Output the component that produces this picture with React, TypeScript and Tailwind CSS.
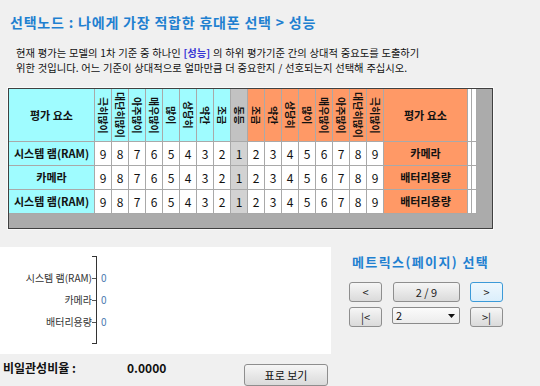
import React from 'react';

const LEFT_HEAD = ['극히많이', '대단히많이', '아주많이', '매우많이', '많이', '상당히', '약간', '조금'];
const RIGHT_HEAD = [...LEFT_HEAD].reverse();
const NUMS = [9, 8, 7, 6, 5, 4, 3, 2, 1, 2, 3, 4, 5, 6, 7, 8, 9];

const ROWS = [
  { left: '시스템 램(RAM)', right: '카메라' },
  { left: '카메라', right: '배터리용량' },
  { left: '시스템 램(RAM)', right: '배터리용량' },
];

const cell = 'border-r border-b border-[#a9a9a9] flex items-center justify-center';
const vtext = 'text-[10px] leading-[11px] font-bold [writing-mode:vertical-rl] [text-orientation:sideways]';

function Btn({ children, w, focus }: { children: React.ReactNode; w: string; focus?: boolean }) {
  return (
    <div
      className={`${w} h-[20px] flex items-center justify-center rounded-[3px] border text-[11px] leading-none text-[#222] bg-linear-to-b ${
        focus
          ? 'border-[#3c9ad8] from-[#eef7fd] to-[#dbeefb]'
          : 'border-[#8e8e8e] from-[#f6f6f6] to-[#dadada]'
      }`}
    >
      {children}
    </div>
  );
}

export default function App() {
  return (
    <div className="w-[540px] h-[386px] overflow-hidden bg-[#f0f0f0] font-['Noto_Sans_CJK_KR',sans-serif] text-[#111]">
      {/* title */}
      <div className="pt-[13px] pl-[10px] text-[14px] leading-[18px] font-bold tracking-[0.8px] text-[#1f80d0]">
        선택노드 : 나에게 가장 적합한 휴대폰 선택 &gt; 성능
      </div>

      {/* description */}
      <p className="mt-[14px] pl-[16px] text-[10.3px] leading-[15px] [word-spacing:0.5px] text-[#111]">
        현재 평가는 모델의 1차 기준 중 하나인 <span className="font-bold text-[#3535d5]">[성능]</span> 의 하위 평가기준 간의 상대적 중요도를 도출하기
        <br />
        위한 것입니다. 어느 기준이 상대적으로 얼마만큼 더 중요한지 / 선호되는지 선택해 주십시오.
      </p>

      {/* comparison table */}
      <div className="mt-[13px] ml-[8px] w-[485px] border border-[#404040] bg-[#ababab] shadow-[0_0_0_1px_#fafafa]">
        <div className="grid grid-cols-[86px_repeat(17,17px)_84px_4px_5px] grid-rows-[53px_24px_24px_24px] w-[468px] text-[11px] font-bold">
          <div className={`${cell} bg-[#9ffcff]`}>평가 요소</div>
          {LEFT_HEAD.map((t, i) => (
            <div key={'l' + i} className={`${cell} bg-[#9ffcff]`}>
              <span className={vtext}>{t}</span>
            </div>
          ))}
          <div className={`${cell} bg-[#c2c2c2]`}>
            <span className={vtext}>동등</span>
          </div>
          {RIGHT_HEAD.map((t, i) => (
            <div key={'r' + i} className={`${cell} bg-[#ff9966]`}>
              <span className={vtext}>{t}</span>
            </div>
          ))}
          <div className={`${cell} bg-[#ff9966]`}>평가 요소</div>
          <div className={`${cell} bg-white`} />
          <div className={`${cell} bg-white`} />

          {ROWS.map((r, ri) => (
            <React.Fragment key={ri}>
              <div className={`${cell} bg-[#9ffcff]`}>{r.left}</div>
              {NUMS.map((n, i) => (
                <div
                  key={i}
                  className={`${cell} font-normal text-[12px] ${i === 8 ? 'bg-[#d2d2d2]' : 'bg-white'}`}
                >
                  {n}
                </div>
              ))}
              <div className={`${cell} bg-[#ff9966]`}>{r.right}</div>
              <div className={`${cell} bg-white`} />
              <div className={`${cell} bg-white`} />
            </React.Fragment>
          ))}
        </div>
        <div className="h-[14px]" />
      </div>

      {/* lower band */}
      <div className="mt-[18px] flex">
        <div className="w-[331px] h-[107px] bg-white pt-[9px]">
          <div className="flex">
            <div className="w-[92px] h-[88px] flex flex-col justify-center items-end text-[10px] text-[#333]">
              {ROWS.map((_, i) => (
                <div key={i} className="h-[22px] leading-[22px]">
                  {['시스템 램(RAM)', '카메라', '배터리용량'][i]}
                </div>
              ))}
            </div>
            <div className="w-[5px] h-[88px] border-y border-r border-[#333] flex flex-col justify-center">
              {[0, 1, 2].map((i) => (
                <div key={i} className="h-[22px] flex items-center">
                  <div className="w-[4px] border-t border-[#555]" />
                </div>
              ))}
            </div>
            <div className="h-[88px] pl-[4px] flex flex-col justify-center text-[10px] text-[#4a78b0]">
              {[0, 1, 2].map((i) => (
                <div key={i} className="h-[22px] leading-[22px]">0</div>
              ))}
            </div>
          </div>
        </div>

        <div className="pl-[18px]">
          <div className="mt-[6px] ml-[3px] text-[13px] leading-[18px] font-bold tracking-[1.4px] text-[#1f80d0]">
            메트릭스(페이지) 선택
          </div>
          <div className="mt-[11px] flex items-start gap-[10px]">
            <Btn w="w-[33px]">&lt;</Btn>
            <Btn w="w-[67px] ml-[1px]">2 / 9</Btn>
            <Btn w="w-[33px]" focus>&gt;</Btn>
          </div>
          <div className="mt-[5px] flex items-start gap-[10px]">
            <Btn w="w-[33px]">|&lt;</Btn>
            <div className="w-[68px] h-[17px] border border-[#8a8a8a] rounded-[2px] bg-linear-to-b from-[#fbfbfb] to-[#ececec] flex items-center justify-between pl-[3px] pr-[4px] text-[11px] leading-none">
              <span>2</span>
              <svg width="7" height="4" viewBox="0 0 7 4">
                <path d="M0 0h7L3.5 4z" fill="#111" />
              </svg>
            </div>
            <Btn w="w-[33px]">&gt;|</Btn>
          </div>
        </div>
      </div>

      {/* bottom row */}
      <div className="flex items-start">
        <div className="mt-[6px] pl-[3px] w-[127px] text-[12px] leading-[16px] font-bold">비일관성비율 :</div>
        <div className="mt-[6px] w-[117px] text-[12px] leading-[16px] font-bold">0.0000</div>
        <div className="mt-[10px] w-[84px] h-[22px] rounded-[3px] border border-[#8e8e8e] bg-linear-to-b from-[#f6f6f6] to-[#dadada] flex items-center justify-center text-[11px] leading-none">
          표로 보기
        </div>
      </div>
    </div>
  );
}
